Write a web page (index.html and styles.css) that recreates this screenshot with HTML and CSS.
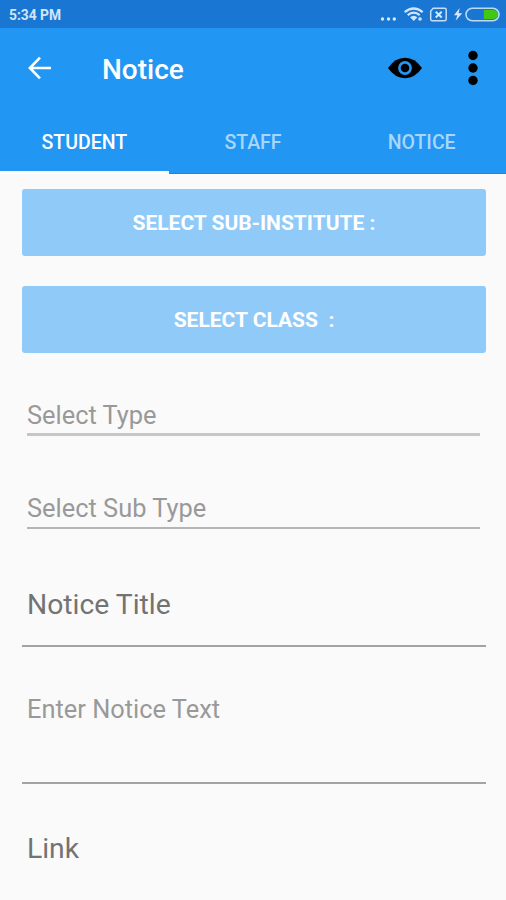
FILE: index.html
```html
<!DOCTYPE html>
<html lang="en">
<head>
<meta charset="utf-8">
<title>Notice</title>
<link rel="stylesheet" href="styles.css">
</head>
<body>
<div class="status">
  <span class="time">5:34 PM</span>
  <svg class="indicators" width="124" height="28" viewBox="0 0 124 28" fill="none">
    <g fill="#d8eafb"><circle cx="3.5" cy="19" r="1.7"/><circle cx="9.5" cy="19" r="1.7"/><circle cx="15.3" cy="19" r="1.7"/></g>
    <g transform="translate(1.2 0)">
    <g stroke="#d1e5f9" stroke-width="2.2"><path d="M24.5 12.2Q33.5 4.8 42.5 12.2"/><path d="M27.5 15.2Q33.5 10.1 39.5 15.2"/></g>
    <path d="M29.8 17.2Q33.5 14.2 37.2 17.2L33.5 21Z" fill="#d1e5f9"/><circle cx="39.8" cy="19" r="1.8" fill="#d1e5f9"/>
    <path d="M53 8.2H64.5Q66 8.2 66 9.7V19.2Q66 20.7 64.5 20.7H52Q50.5 20.7 50.5 19.2V11Z" stroke="#c4def8" stroke-width="1.5"/>
    <path d="M55.5 11.7L61.5 17.5M61.5 11.7L55.5 17.5" stroke="#d8eafb" stroke-width="1.9"/>
    <path d="M79.5 8L73.8 15.2H77.2L75.4 20.8L82 13.2H78.3Z" fill="#d8eafb"/>
    </g>
    <rect x="87" y="8.3" width="33" height="12.4" rx="6.2" stroke="#b9d9f7" stroke-width="1.6"/>
    <path d="M104.8 10H114.5Q119 10.3 119 14.5Q119 18.7 114.5 19H104.8Z" fill="#43c713"/>
  </svg>
</div>
<header class="toolbar">
  <svg class="back" width="24" height="24" viewBox="0 0 24 24" fill="none" stroke="#fff" stroke-width="2.6"><path d="M12 1.7L1.9 12L12 22.3M2 12H23"/></svg>
  <h1>Notice</h1>
  <svg class="eye" width="34" height="22" viewBox="0 0 34 22"><path d="M0 11Q7 .8 17 .8Q27 .8 34 11Q27 21.2 17 21.2Q7 21.2 0 11Z"/><circle cx="17" cy="11" r="5.6" fill="none" stroke="#2196f3" stroke-width="2.6"/></svg>
  <svg class="more" width="10" height="36" viewBox="0 0 10 36"><circle cx="5" cy="5.5" r="4.7"/><circle cx="5" cy="18" r="4.7"/><circle cx="5" cy="30.5" r="4.7"/></svg>
</header>
<nav class="tabs">
  <a class="tab active">STUDENT</a>
  <a class="tab">STAFF</a>
  <a class="tab">NOTICE</a>
</nav>
<main class="form">
  <button class="picker">SELECT SUB-INSTITUTE :</button>
  <button class="picker">SELECT CLASS &nbsp;:</button>
  <div class="field select">Select Type</div>
  <div class="field select subtype">Select Sub Type</div>
  <div class="field title">Notice Title</div>
  <div class="field message">Enter Notice Text</div>
  <div class="field link">Link</div>
</main>
</body>
</html>
```
FILE: styles.css
```css
* { box-sizing: border-box; }
body {
  margin: 0;
  height: 900px;
  overflow: hidden;
  background: #fafafa;
  font-family: Roboto, "Liberation Sans", sans-serif;
}
.status {
  display: flex;
  justify-content: space-between;
  height: 28px;
  padding: 0 3px 0 9px;
  background: #1976d2;
}
.time {
  color: #d1e5f9;
  font-size: 13.8px;
  font-weight: 700;
  line-height: 30px;
}
.toolbar {
  display: flex;
  align-items: center;
  height: 81px;
  padding: 0 28px;
  background: #2196f3;
}
.back { margin-top: -2px; }
h1 {
  flex: 1;
  margin: 2px 0 0 50px;
  color: #fff;
  font-size: 28px;
  font-weight: 500;
  line-height: 36px;
}
.eye {
  margin: -2px 46px 0 0;
}
.more { margin-top: -2px; }
.tabs {
  display: grid;
  grid-template-columns: repeat(3, 1fr);
  height: 65px;
  background: #2196f3;
  border-bottom: 1px solid #1689e8;
}
.tab {
  height: 65px;
  color: #a9d6fb;
  font-size: 19.5px;
  font-weight: 500;
  line-height: 68px;
  text-align: center;
}
.tab.active {
  color: #fff;
  border-bottom: 3px solid #fff;
}
.form {
  display: flex;
  flex-direction: column;
  padding: 15px 20px 0 22px;
}
.picker {
  height: 67px;
  margin: 0 0 30px;
  padding: 2px 0 0;
  border: 0;
  border-radius: 3px;
  background: #90caf9;
  color: #fff;
  font: 700 21px/65px Roboto, "Liberation Sans", sans-serif;
}
.field {
  padding-left: 5px;
  color: #737373;
  font-size: 28.3px;
  line-height: 35px;
}
.select {
  height: 36px;
  margin: 17px 6px 0 5px;
  padding-left: 0;
  border-bottom: 3px solid #c6c6c6;
  color: #999;
  font-size: 25.4px;
  line-height: 30px;
}
.subtype {
  margin-top: 57px;
  border-bottom: 2px solid #b4b4b4;
}
.title {
  height: 60px;
  margin-top: 58px;
  border-bottom: 2px solid #a3a3a3;
}
.message {
  height: 90px;
  margin-top: 47px;
  border-bottom: 2px solid #a3a3a3;
  color: #999;
  font-size: 25.4px;
  line-height: 30px;
}
.link { margin-top: 47px; }
```
